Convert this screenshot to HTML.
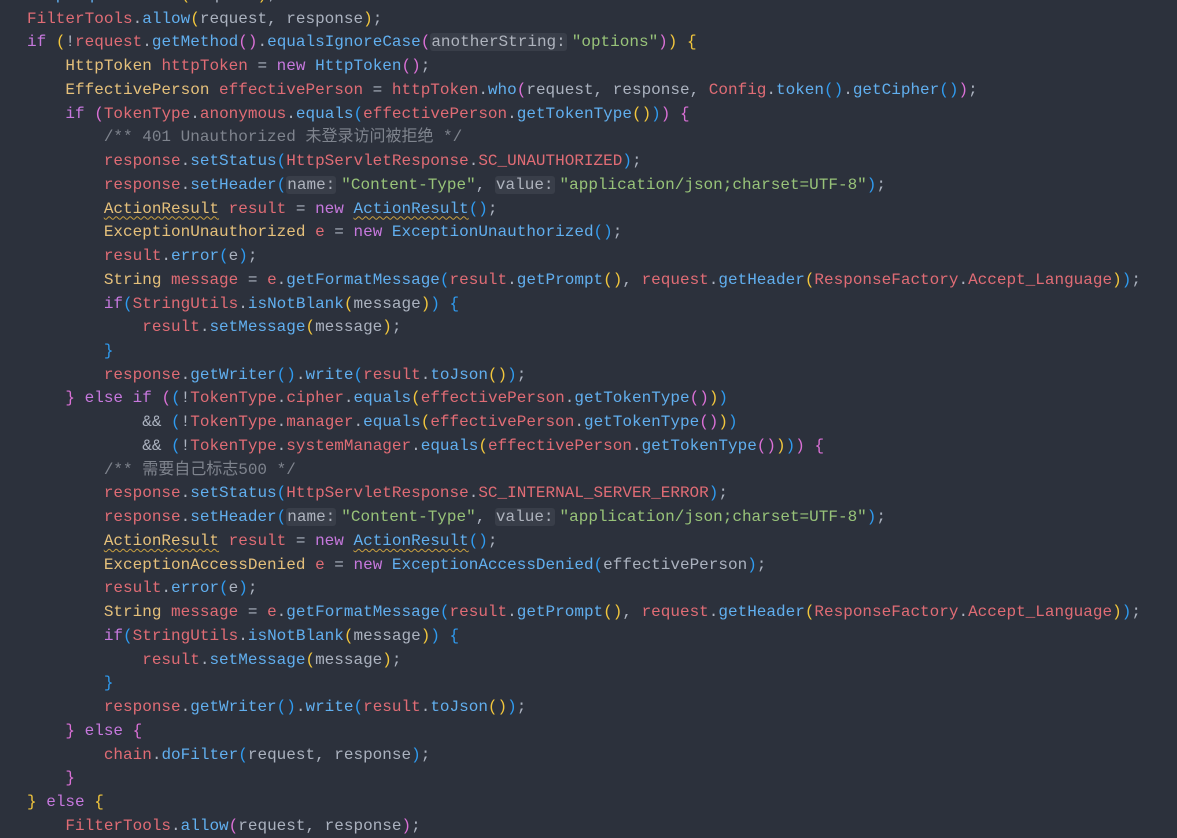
<!DOCTYPE html>
<html><head><meta charset="utf-8"><style>
html,body{margin:0;padding:0;background:#2c313c;width:1177px;height:823px;overflow:hidden}
pre{position:absolute;left:27px;top:-16px;margin:0;font-family:"Liberation Mono","Noto Sans CJK SC",monospace;font-size:16px;line-height:23.73px;color:#abb2bf;white-space:pre}
.k{color:#c678dd}.t{color:#e5c07b}.v{color:#e06c75}.f{color:#61afef}.s{color:#98c379}.c{color:#7f848e}
.Y{color:#f2c63c}.P{color:#da70d6}.B{color:#2f9bf0}
.h{background:#393e49;color:#aeb3bd;border-radius:3px;padding:0 1px;margin-right:5px}
.w{text-decoration:underline wavy #c9a040;text-underline-offset:3px;text-decoration-thickness:1px}
</style></head><body><pre><span class="f">HttpRequestCheck</span><span class="Y">(</span>request<span class="Y">)</span>;
<span class="v">FilterTools</span>.<span class="f">allow</span><span class="Y">(</span>request, response<span class="Y">)</span>;
<span class="k">if</span> <span class="Y">(</span>!<span class="v">request</span>.<span class="f">getMethod</span><span class="P">()</span>.<span class="f">equalsIgnoreCase</span><span class="P">(</span><span class="h">anotherString:</span><span class="s">"options"</span><span class="P">)</span><span class="Y">)</span> <span class="Y">{</span>
    <span class="t">HttpToken</span> <span class="v">httpToken</span> = <span class="k">new</span> <span class="f">HttpToken</span><span class="P">()</span>;
    <span class="t">EffectivePerson</span> <span class="v">effectivePerson</span> = <span class="v">httpToken</span>.<span class="f">who</span><span class="P">(</span>request, response, <span class="v">Config</span>.<span class="f">token</span><span class="B">()</span>.<span class="f">getCipher</span><span class="B">()</span><span class="P">)</span>;
    <span class="k">if</span> <span class="P">(</span><span class="v">TokenType</span>.<span class="v">anonymous</span>.<span class="f">equals</span><span class="B">(</span><span class="v">effectivePerson</span>.<span class="f">getTokenType</span><span class="Y">()</span><span class="B">)</span><span class="P">)</span> <span class="P">{</span>
        <span class="c">/** 401 Unauthorized 未登录访问被拒绝 */</span>
        <span class="v">response</span>.<span class="f">setStatus</span><span class="B">(</span><span class="v">HttpServletResponse</span>.<span class="v">SC_UNAUTHORIZED</span><span class="B">)</span>;
        <span class="v">response</span>.<span class="f">setHeader</span><span class="B">(</span><span class="h">name:</span><span class="s">"Content-Type"</span>, <span class="h">value:</span><span class="s">"application/json;charset=UTF-8"</span><span class="B">)</span>;
        <span class="t w">ActionResult</span> <span class="v">result</span> = <span class="k">new</span> <span class="f w">ActionResult</span><span class="B">()</span>;
        <span class="t">ExceptionUnauthorized</span> <span class="v">e</span> = <span class="k">new</span> <span class="f">ExceptionUnauthorized</span><span class="B">()</span>;
        <span class="v">result</span>.<span class="f">error</span><span class="B">(</span>e<span class="B">)</span>;
        <span class="t">String</span> <span class="v">message</span> = <span class="v">e</span>.<span class="f">getFormatMessage</span><span class="B">(</span><span class="v">result</span>.<span class="f">getPrompt</span><span class="Y">()</span>, <span class="v">request</span>.<span class="f">getHeader</span><span class="Y">(</span><span class="v">ResponseFactory</span>.<span class="v">Accept_Language</span><span class="Y">)</span><span class="B">)</span>;
        <span class="k">if</span><span class="B">(</span><span class="v">StringUtils</span>.<span class="f">isNotBlank</span><span class="Y">(</span>message<span class="Y">)</span><span class="B">)</span> <span class="B">{</span>
            <span class="v">result</span>.<span class="f">setMessage</span><span class="Y">(</span>message<span class="Y">)</span>;
        <span class="B">}</span>
        <span class="v">response</span>.<span class="f">getWriter</span><span class="B">()</span>.<span class="f">write</span><span class="B">(</span><span class="v">result</span>.<span class="f">toJson</span><span class="Y">()</span><span class="B">)</span>;
    <span class="P">}</span> <span class="k">else if</span> <span class="P">(</span><span class="B">(</span>!<span class="v">TokenType</span>.<span class="v">cipher</span>.<span class="f">equals</span><span class="Y">(</span><span class="v">effectivePerson</span>.<span class="f">getTokenType</span><span class="P">()</span><span class="Y">)</span><span class="B">)</span>
            &amp;&amp; <span class="B">(</span>!<span class="v">TokenType</span>.<span class="v">manager</span>.<span class="f">equals</span><span class="Y">(</span><span class="v">effectivePerson</span>.<span class="f">getTokenType</span><span class="P">()</span><span class="Y">)</span><span class="B">)</span>
            &amp;&amp; <span class="B">(</span>!<span class="v">TokenType</span>.<span class="v">systemManager</span>.<span class="f">equals</span><span class="Y">(</span><span class="v">effectivePerson</span>.<span class="f">getTokenType</span><span class="P">()</span><span class="Y">)</span><span class="B">)</span><span class="P">)</span> <span class="P">{</span>
        <span class="c">/** 需要自己标志500 */</span>
        <span class="v">response</span>.<span class="f">setStatus</span><span class="B">(</span><span class="v">HttpServletResponse</span>.<span class="v">SC_INTERNAL_SERVER_ERROR</span><span class="B">)</span>;
        <span class="v">response</span>.<span class="f">setHeader</span><span class="B">(</span><span class="h">name:</span><span class="s">"Content-Type"</span>, <span class="h">value:</span><span class="s">"application/json;charset=UTF-8"</span><span class="B">)</span>;
        <span class="t w">ActionResult</span> <span class="v">result</span> = <span class="k">new</span> <span class="f w">ActionResult</span><span class="B">()</span>;
        <span class="t">ExceptionAccessDenied</span> <span class="v">e</span> = <span class="k">new</span> <span class="f">ExceptionAccessDenied</span><span class="B">(</span>effectivePerson<span class="B">)</span>;
        <span class="v">result</span>.<span class="f">error</span><span class="B">(</span>e<span class="B">)</span>;
        <span class="t">String</span> <span class="v">message</span> = <span class="v">e</span>.<span class="f">getFormatMessage</span><span class="B">(</span><span class="v">result</span>.<span class="f">getPrompt</span><span class="Y">()</span>, <span class="v">request</span>.<span class="f">getHeader</span><span class="Y">(</span><span class="v">ResponseFactory</span>.<span class="v">Accept_Language</span><span class="Y">)</span><span class="B">)</span>;
        <span class="k">if</span><span class="B">(</span><span class="v">StringUtils</span>.<span class="f">isNotBlank</span><span class="Y">(</span>message<span class="Y">)</span><span class="B">)</span> <span class="B">{</span>
            <span class="v">result</span>.<span class="f">setMessage</span><span class="Y">(</span>message<span class="Y">)</span>;
        <span class="B">}</span>
        <span class="v">response</span>.<span class="f">getWriter</span><span class="B">()</span>.<span class="f">write</span><span class="B">(</span><span class="v">result</span>.<span class="f">toJson</span><span class="Y">()</span><span class="B">)</span>;
    <span class="P">}</span> <span class="k">else</span> <span class="P">{</span>
        <span class="v">chain</span>.<span class="f">doFilter</span><span class="B">(</span>request, response<span class="B">)</span>;
    <span class="P">}</span>
<span class="Y">}</span> <span class="k">else</span> <span class="Y">{</span>
    <span class="v">FilterTools</span>.<span class="f">allow</span><span class="P">(</span>request, response<span class="P">)</span>;
</pre></body></html>
